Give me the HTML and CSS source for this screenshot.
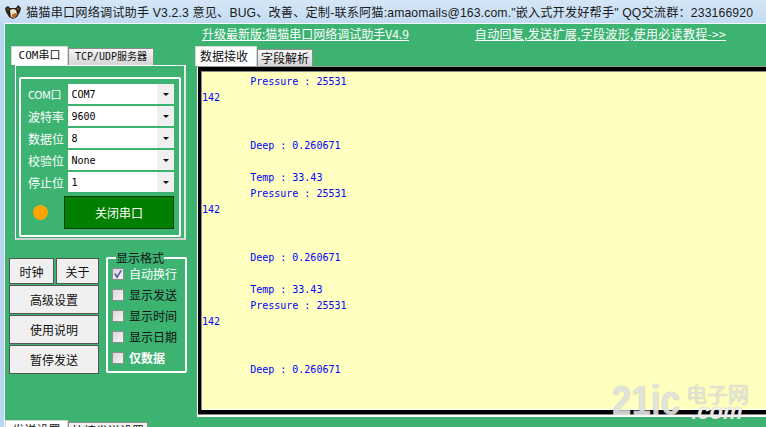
FILE: index.html
```html
<!DOCTYPE html>
<html lang="zh">
<head>
<meta charset="utf-8">
<title>猫猫串口网络调试助手</title>
<link rel="stylesheet" href="styles.css">
</head>
<body>
<div class="app">
  <header class="titlebar">
    <svg class="cat" viewBox="0 0 16 14" width="16" height="14"><path fill="#2e2013" d="M0 3l3-2 2 2h6l2-3 3 3-1 4-3 5-4 2-4-2-3-5z"/><path fill="#efe6d2" d="M5 5l3-1 3 1 1 4-3 4-3-1z"/><path fill="#b0702c" d="M7 9l4-1 1 2-3 3-2-1z"/><path fill="#8a6a3c" d="M2 3l2 1-1 2zM12 3l2 0-1 3z"/></svg>
    <span class="title">猫猫串口网络调试助手 V3.2.3 意见、BUG、改善、定制-联系阿猫:amaomails@163.com."嵌入式开发好帮手" QQ交流群：233166920</span>
  </header>
  <main class="window">
    <aside class="left">
      <div class="tabs left-tabs">
        <span class="tab active">COM串口</span>
        <span class="tab">TCP/UDP服务器</span>
      </div>
      <section class="com-panel">
        <div class="com-group">
          <div class="field"><label>COM口</label><div class="combo"><span>COM7</span><i></i></div></div>
          <div class="field"><label>波特率</label><div class="combo"><span>9600</span><i></i></div></div>
          <div class="field"><label>数据位</label><div class="combo"><span>8</span><i></i></div></div>
          <div class="field"><label>校验位</label><div class="combo"><span>None</span><i></i></div></div>
          <div class="field"><label>停止位</label><div class="combo"><span>1</span><i></i></div></div>
          <div class="open-row">
            <span class="led"></span>
            <button class="close-btn">关闭串口</button>
          </div>
        </div>
      </section>
      <div class="tools">
        <div class="btns">
          <div class="btn-pair"><button class="btn">时钟</button><button class="btn">关于</button></div>
          <button class="btn tall">高级设置</button>
          <button class="btn tall">使用说明</button>
          <button class="btn tall">暂停发送</button>
        </div>
        <fieldset class="format">
          <legend>显示格式</legend>
          <div class="check on"><i><svg viewBox="0 0 11 11" width="10" height="10"><path d="M2 5l2.500 4L9 1.500" fill="none" stroke="#4a5fa8" stroke-width="1.800"/></svg></i>自动换行</div>
          <div class="check"><i></i>显示发送</div>
          <div class="check"><i></i>显示时间</div>
          <div class="check"><i></i>显示日期</div>
          <div class="check on strong"><i></i>仅数据</div>
        </fieldset>
      </div>
      <div class="tabs bottom-tabs">
        <span class="tab active">发送设置</span>
        <span class="tab">快捷发送设置</span>
      </div>
    </aside>
    <section class="right">
      <div class="links">
        <a>升级最新版:猫猫串口网络调试助手V4.9</a>
        <a class="link-wide">自动回复,发送扩展,字段波形,使用必读教程-&gt;&gt;</a>
      </div>
      <div class="tabs right-tabs">
        <span class="tab active">数据接收</span>
        <span class="tab">字段解析</span>
      </div>
      <div class="output-frame">
<pre class="output">        Pressure : 25531
142


        Deep : 0.260671

        Temp : 33.43
        Pressure : 25531
142


        Deep : 0.260671

        Temp : 33.43
        Pressure : 25531
142


        Deep : 0.260671</pre>
      </div>
    </section>
  </main>
  <div class="watermark"><b>21ic</b><div class="wm-side"><span>电子网</span><em>.com</em></div></div>
</div>
</body>
</html>
```
FILE: styles.css
```css
* { box-sizing: border-box; }
html, body { margin: 0; height: 100%; overflow: hidden; }
body { font-family: "Noto Sans CJK SC", "Liberation Sans", sans-serif; }
.app { position: relative; width: 766px; height: 427px; overflow: hidden; background: #b9d7f3; }

.titlebar { height: 23px; display: flex; align-items: center; padding-left: 5px; gap: 5px;
  background: linear-gradient(#d5e6f6, #c3dcf3); }
.cat { flex: none; }
.title { font-family: "Liberation Sans", "Noto Sans CJK SC", sans-serif; font-size: 12.200px; letter-spacing: .14px; color: #1a1a1a; white-space: nowrap; }

.window { height: 404px; margin-left: 4px; background: #3cb371; border-top: 1px solid #f2f6fa; border-left: 1px solid #f2f6fa; display: flex; }

.left { width: 187px; flex: none; padding-top: 22px; padding-left: 6px; display: flex; flex-direction: column; color: #fff; }
.right { flex: 1; min-width: 0; padding-left: 4px; }

.tabs { display: flex; align-items: flex-end; }
.tab { display: block; height: 17px; font-size: 12px; line-height: 16px; padding: 0 3px; text-align: center; white-space: nowrap; color: #111;
  background: linear-gradient(#f6f6f6, #d4d4d4); border: 1px solid #8c8c8c; border-bottom: 0; }
.tab.active { height: 19px; background: #fff; line-height: 18px; border-color: #d8d8d8; }

.left-tabs .tab.active { width: 57px; font-family: "DejaVu Sans Mono", "Noto Sans CJK SC", monospace; font-size: 11px; padding: 0; }
.left-tabs .tab { width: 86px; font-family: "DejaVu Sans Mono", "Noto Sans CJK SC", monospace; font-size: 10px; padding: 0; }

.com-panel { width: 171px; height: 175px; margin-left: 4px; border: 1px solid #fff; border-right: 2px solid #e6e6e6; border-bottom: 2px solid #d0d0d0; padding: 11px 5px 0 3px; }
.com-group { width: 162px; height: 160px; border: 2px solid #fff; border-radius: 2px; padding: 5px 5px 0 7px; }
.field { display: flex; align-items: center; height: 20px; margin-bottom: 2px; }
.field label { width: 41px; font-size: 12px; color: #fff; white-space: nowrap; }
.field:first-child label { font-size: 11px; letter-spacing: -.4px; }
.combo { width: 107px; height: 20px; background: #fff; display: flex; align-items: center; justify-content: space-between; color: #000;
  font-family: "DejaVu Sans Mono", monospace; font-size: 10px; padding-left: 3px; }
.combo i { position: relative; width: 17px; height: 20px; background: #efefef; }
.combo i::after { content: ""; position: absolute; left: 6px; top: 9px; border: 3px solid transparent; border-top: 3px solid #111; border-bottom: 0; }

.open-row { display: flex; align-items: center; margin-top: 4px; }
.led { width: 15px; height: 15px; border-radius: 50%; background: #ffa500; margin-right: 16px; margin-left: 5px; flex: none; }
.close-btn { width: 110px; height: 33px; background: #008000; border: 1px solid #0b3d0b; color: #fff; font: 12px "Noto Sans CJK SC", sans-serif; padding: 0; }

.tools { display: flex; margin-top: 11px; margin-left: -2px; }
.btns { width: 90px; padding-top: 7px; display: flex; flex-direction: column; gap: 1px; }
.btn-pair { display: flex; gap: 2px; }
.btn-pair .btn { height: 26px; flex: 1 1 45px; }
.btn-pair .btn + .btn { flex: 0 0 43px; }
.btn { background: #f0f0f0; border: 1px solid #555; color: #111; font: 12px "Noto Sans CJK SC", sans-serif; padding: 0; }
.btn.tall { height: 29px; }

.format { width: 81px; height: 122px; margin: 0 0 0 7px; padding: 0 0 0 4px; border: 2px solid #fff; border-radius: 2px; min-width: 0; }
.format legend { padding: 0; margin-left: 4px; font-size: 12px; line-height: 14px; color: #111; background: #3cb371; white-space: nowrap; }
.check { display: flex; align-items: center; height: 21px; font-size: 12px; color: #111; white-space: nowrap; position: relative; top: -2px; }
.check i { width: 12px; height: 12px; margin-right: 5px; flex: none; background: linear-gradient(135deg, #d8d8d8, #f4f4f4); border: 1px solid #8d8d8d; display: block; }
.check svg { display: block; }
.check.on { color: #fff; }
.check.strong { font-weight: 700; }

.bottom-tabs { margin-top: auto; margin-left: -6px; height: 7px; align-items: flex-start; overflow: visible; }
.bottom-tabs .tab.active { width: 63px; height: 19px; margin-top: 0; }
.bottom-tabs .tab { width: 80px; height: 17px; margin-top: 2px; font-size: 12px; }

.links { display: flex; justify-content: space-between; height: 22px; padding: 3px 40px 0 6px; }
.links a { font-size: 12px; line-height: 14px; color: #fff; text-decoration: underline; white-space: nowrap; }
.links .link-wide { letter-spacing: .32px; }
.tabs.right-tabs { margin-left: -1px; height: 20px; }
.right-tabs .tab.active { width: 62px; height: 20px; font-size: 12px; padding: 0 4px 0 0; }
.right-tabs .tab { width: 56px; height: 17px; font-size: 12px; padding: 0; }

.output-frame { width: 580px; height: 351px; margin-left: 1px; background: #fff; border-top: 1px solid #999; padding: 0 0 3px 1px; }
.output { margin: 0; height: 100%; background: #ffffc0; border: solid #000; border-width: 4px 4px 4px 3px; box-shadow: inset 1px 1px 0 #888, inset 0 -1px 0 #fff, 0 1px 0 #888;
  padding: 3px 0 0 1px; font-family: "DejaVu Sans Mono", monospace; font-size: 10px; line-height: 16px; color: #00f; overflow: hidden; }

.watermark { position: absolute; left: 612px; top: 384px; width: 150px; height: 36px; display: flex; gap: 6px; color: rgba(255,255,255,.72); text-shadow: 0 0 1px rgba(110,110,110,.7); pointer-events: none; }
.watermark b { font: 700 35px/34px "Liberation Sans", sans-serif; transform: scaleY(1.2); }
.wm-side { display: flex; flex-direction: column; white-space: nowrap; }
.wm-side span { font-size: 21px; line-height: 19px; height: 19px; }
.wm-side em { display: block; height: 17px; font: italic 700 22px/17px "Liberation Sans", sans-serif; margin-left: 5px; color: rgba(255,255,255,.85); }
```
